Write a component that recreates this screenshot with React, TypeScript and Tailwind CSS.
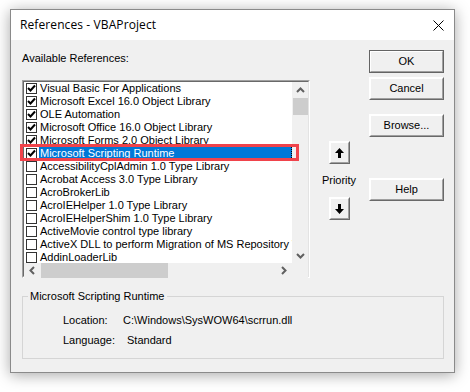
import React from "react";

type Ref = { name: string; checked: boolean };

const refs: Ref[] = [
  { name: "Visual Basic For Applications", checked: true },
  { name: "Microsoft Excel 16.0 Object Library", checked: true },
  { name: "OLE Automation", checked: true },
  { name: "Microsoft Office 16.0 Object Library", checked: true },
  { name: "Microsoft Forms 2.0 Object Library", checked: true },
  { name: "Microsoft Scripting Runtime", checked: true },
  { name: "AccessibilityCplAdmin 1.0 Type Library", checked: false },
  { name: "Acrobat Access 3.0 Type Library", checked: false },
  { name: "AcroBrokerLib", checked: false },
  { name: "AcroIEHelper 1.0 Type Library", checked: false },
  { name: "AcroIEHelperShim 1.0 Type Library", checked: false },
  { name: "ActiveMovie control type library", checked: false },
  { name: "ActiveX DLL to perform Migration of MS Repository V1 Objects", checked: false },
  { name: "AddinLoaderLib", checked: false },
];

const SELECTED = 5;

const CheckBox = ({ checked }: { checked: boolean }) => (
  <div className="w-[11px] h-[11px] border border-[#333] bg-white flex items-center justify-center shrink-0">
    {checked && (
      <svg width="9" height="9" viewBox="0 0 9 9">
        <path d="M1 4 L3.5 6.5 L8 1.5" fill="none" stroke="#000" strokeWidth="2" />
      </svg>
    )}
  </div>
);

const Chevron = ({ dir }: { dir: "up" | "down" | "left" | "right" }) => {
  const paths: Record<string, string> = {
    up: "M1 6 L4.5 2.5 L8 6",
    down: "M1 3 L4.5 6.5 L8 3",
    left: "M6 1 L2.5 4.5 L6 8",
    right: "M3 1 L6.5 4.5 L3 8",
  };
  return (
    <svg width="9" height="9" viewBox="0 0 9 9">
      <path d={paths[dir]} fill="none" stroke="#606060" strokeWidth="2" />
    </svg>
  );
};

const WinButton = ({ text, isDefault }: { text: string; isDefault?: boolean }) => (
  <div
    className={
      isDefault
        ? "w-[75px] h-[23px] border border-[#646464]"
        : "w-[75px] h-[23px] border border-t-white border-l-white border-r-[#696969] border-b-[#696969]"
    }
  >
    <div className="w-full h-full border border-t-white border-l-white border-r-[#a0a0a0] border-b-[#a0a0a0] bg-[#f0f0f0] flex items-center justify-center text-[11px] text-black">
      {text}
    </div>
  </div>
);

const ArrowButton = ({ up }: { up?: boolean }) => (
  <div className="w-[21px] h-[23px] border border-t-white border-l-white border-r-[#696969] border-b-[#696969]">
    <div className="w-full h-full border border-t-white border-l-white border-r-[#a0a0a0] border-b-[#a0a0a0] bg-[#f0f0f0] flex items-center justify-center">
      <svg width="9" height="10" viewBox="0 0 9 10">
        {up ? (
          <path d="M4.5 0 L9 5 L6 5 L6 10 L3 10 L3 5 L0 5 Z" fill="#000" />
        ) : (
          <path d="M4.5 10 L9 5 L6 5 L6 0 L3 0 L3 5 L0 5 Z" fill="#000" />
        )}
      </svg>
    </div>
  </div>
);

export default function App() {
  return (
    <div
      className="w-[470px] h-[392px] bg-white pl-[10px] pt-[9px]"
      style={{ fontFamily: '"Liberation Sans", Arial, sans-serif' }}
    >
      <div className="w-[445px] h-[364px] border border-[#8a8a8a] bg-[#f0f0f0] shadow-[0_2px_14px_rgba(0,0,0,0.35)] flex flex-col">
        <div className="h-[30px] bg-white flex items-center justify-between pl-[9px] pr-[10px] shrink-0">
          <span className="text-[12px] text-black tracking-[0.1px]" style={{ fontFamily: '"Open Sans", "Liberation Sans", sans-serif' }}>
            References - VBAProject
          </span>
          <svg width="11" height="11" viewBox="0 0 11 11">
            <path d="M0.5 0.5 L10.5 10.5 M10.5 0.5 L0.5 10.5" stroke="#000" strokeWidth="1" />
          </svg>
        </div>

        <div className="flex pl-[11px] pr-[10px] pt-[10px]">
          <div className="w-[288px] flex flex-col">
            <div className="mt-[2px] h-[13px] leading-[13px] text-[11px] text-black">Available References:</div>
            <div className="relative mt-[15px] h-[198px] border border-t-[#a0a0a0] border-l-[#a0a0a0] border-r-white border-b-white">
              <div className="w-full h-full border border-t-[#696969] border-l-[#696969] border-r-[#e3e3e3] border-b-[#e3e3e3] flex flex-col">
                <div className="flex h-[181px]">
                  <div className="flex-1 bg-white overflow-hidden">
                    {refs.map((r, i) => (
                      <div key={r.name} className="h-[13px] flex items-center pl-[2px]">
                        <CheckBox checked={r.checked} />
                        <div
                          className={
                            i === SELECTED
                              ? "ml-[2px] flex-1 h-[13px] bg-[#0078d7] text-white text-[11px] leading-[13px] pl-[1px] whitespace-nowrap border-r border-dotted border-r-black"
                              : "ml-[2px] flex-1 h-[13px] text-black text-[11px] leading-[13px] pl-[1px] whitespace-nowrap"
                          }
                        >
                          {r.name}
                        </div>
                      </div>
                    ))}
                  </div>
                  <div className="w-[16px] bg-[#f0f0f0] flex flex-col items-center">
                    <div className="h-[16px] flex items-center justify-center">
                      <Chevron dir="up" />
                    </div>
                    <div className="w-[15px] h-[17px] bg-[#cdcdcd]" />
                    <div className="flex-1" />
                    <div className="h-[16px] flex items-center justify-center">
                      <Chevron dir="down" />
                    </div>
                  </div>
                </div>
                <div className="flex h-[15px]">
                  <div className="flex-1 bg-[#f0f0f0] flex items-center">
                    <div className="w-[17px] flex justify-center">
                      <Chevron dir="left" />
                    </div>
                    <div className="w-[127px] h-[15px] bg-[#cdcdcd]" />
                    <div className="flex-1" />
                    <div className="w-[17px] flex justify-center">
                      <Chevron dir="right" />
                    </div>
                  </div>
                  <div className="w-[16px] bg-[#f0f0f0]" />
                </div>
              </div>
              <div className="absolute left-[-3px] top-[63px] w-[279px] h-[17px] border-[3px] border-[#f0434b]" />
            </div>
          </div>

          <div className="w-[58px] flex flex-col items-center pt-[91px]">
            <ArrowButton up />
            <div className="mt-[10px] h-[13px] leading-[13px] text-[11px] text-black">Priority</div>
            <div className="mt-[10px]">
              <ArrowButton />
            </div>
          </div>

          <div className="flex-1 flex flex-col items-end">
            <WinButton text="OK" isDefault />
            <div className="mt-[4px]">
              <WinButton text="Cancel" />
            </div>
            <div className="mt-[14px]">
              <WinButton text="Browse..." />
            </div>
            <div className="mt-[41px]">
              <WinButton text="Help" />
            </div>
          </div>
        </div>

        <div className="ml-[11px] mr-[10px] mt-[18px] relative h-[63px] border border-[#d5d5d5]">
          <div className="absolute left-[5px] top-[-7px] bg-[#f0f0f0] px-[2px] h-[13px] leading-[13px] text-[11px] text-black">
            Microsoft Scripting Runtime
          </div>
          <div className="pl-[40px] pt-[17px] text-[11px] text-black">
            <div className="flex h-[13px] leading-[13px]">
              <span className="w-[60px]">Location:</span>
              <span>C:\Windows\SysWOW64\scrrun.dll</span>
            </div>
            <div className="flex h-[13px] leading-[13px] mt-[7px]">
              <span className="w-[64px]">Language:</span>
              <span>Standard</span>
            </div>
          </div>
        </div>
      </div>
    </div>
  );
}
